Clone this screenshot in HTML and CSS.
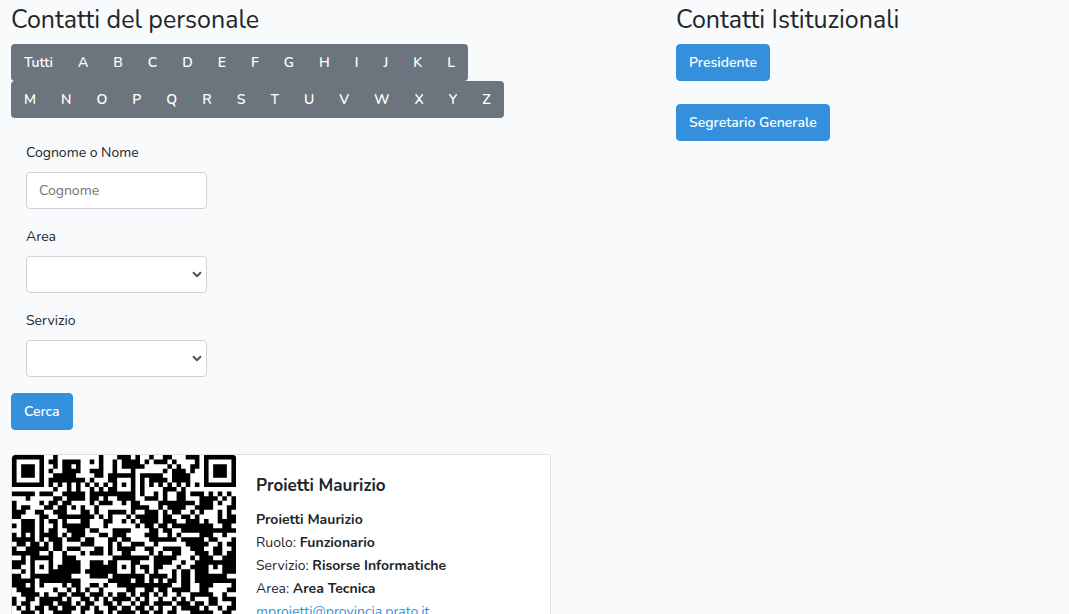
FILE: index.html
```html
<!DOCTYPE html>
<html lang="it">
<head>
<meta charset="utf-8">
<meta name="viewport" content="width=device-width, initial-scale=1">
<title>Contatti del personale</title>
<link rel="stylesheet" href="styles.css">
</head>
<body>
<main class="page">
  <section class="staff">
    <h1 class="heading">Contatti del personale</h1>
    <div class="letters">
      <div class="group"><button>Tutti</button><button>A</button><button>B</button><button>C</button><button>D</button><button>E</button><button>F</button><button>G</button><button>H</button><button>I</button><button>J</button><button>K</button><button>L</button></div>
      <div class="group"><button>M</button><button>N</button><button>O</button><button>P</button><button>Q</button><button>R</button><button>S</button><button>T</button><button>U</button><button>V</button><button>W</button><button>X</button><button>Y</button><button>Z</button></div>
    </div>
    <form class="search">
      <div class="field"><label for="surname">Cognome o Nome</label><input class="control" id="surname" type="text" placeholder="Cognome"></div>
      <div class="field"><label for="area">Area</label><div class="select"><select class="control" id="area"><option></option></select><svg class="chevron" viewBox="0 0 10 7"><path d="M1 1.2 5 5.2 9 1.2"/></svg></div></div>
      <div class="field"><label for="service">Servizio</label><div class="select"><select class="control" id="service"><option></option></select><svg class="chevron" viewBox="0 0 10 7"><path d="M1 1.2 5 5.2 9 1.2"/></svg></div></div>
      <button class="btn" type="submit">Cerca</button>
    </form>
    <article class="card">
      <svg class="qr" viewBox="0 0 49 49" role="img" aria-label="QR"><path id="modules"/></svg>
      <div class="card-body">
        <h2 class="card-title">Proietti Maurizio</h2>
        <p><b>Proietti Maurizio</b></p>
        <p>Ruolo: <b>Funzionario</b></p>
        <p>Servizio: <b>Risorse Informatiche</b></p>
        <p>Area: <b>Area Tecnica</b></p>
        <p><a href="mailto:mproietti@provincia.prato.it">mproietti@provincia.prato.it</a></p>
      </div>
    </article>
  </section>
  <section>
    <h1 class="heading">Contatti Istituzionali</h1>
    <div class="offices">
      <button class="btn">Presidente</button>
      <button class="btn">Segretario Generale</button>
    </div>
  </section>
</main>
<script src="qr.js"></script>
</body>
</html>
```
FILE: styles.css
```css
* { box-sizing: border-box; }
body {
  margin: 0;
  background: #f8fafc;
  color: #212529;
  font: 400 14px/23px Nunito, Lato, sans-serif;
}
button, input, select { font: inherit; }
.page {
  display: grid;
  grid-template-columns: 7fr 4fr;
  padding: 5px 13px 24px 11px;
}
.heading {
  margin: 0 0 8px;
  font-size: 25px;
  line-height: 31px;
  font-weight: 400;
}
.letters { margin-bottom: 23px; }
.group {
  display: flex;
  width: fit-content;
  border-radius: 4px;
  background: #6c757d;
}
.group button {
  padding: 6px 12px;
  border: 1px solid transparent;
  background: none;
  color: #fff;
}
.group button + button { margin-left: -1px; }
.btn {
  padding: 6px 12px;
  border: 1px solid #3490dc;
  border-radius: 4px;
  background: #3490dc;
  color: #fff;
}
.group button, .btn { font-weight: 600; }
.field {
  width: 181px;
  margin: 0 0 16px 15px;
}
.field label {
  display: block;
  margin-bottom: 8px;
}
.control {
  display: block;
  width: 100%;
  height: 37px;
  padding: 6px 12px;
  border: 1px solid #ced4da;
  border-radius: 4px;
  background: #fff;
  color: #495057;
}
.control::placeholder { color: #6c757d; opacity: 1; }
.select { position: relative; }
.select select { appearance: none; }
.chevron {
  position: absolute;
  right: 5px;
  top: 15px;
  width: 10px;
  height: 7px;
  fill: none;
  stroke: #495057;
  stroke-width: 2;
  pointer-events: none;
}
.card {
  display: flex;
  align-items: flex-start;
  max-width: 540px;
  margin-top: 24px;
  overflow: hidden;
  border: 1px solid #dddfe1;
  border-radius: 4px;
  background: #fff;
}
.qr { width: 224px; flex: none; border-radius: 3px; }
.card-body { padding: 20px; }
.card-title {
  margin: 0 0 11px;
  font-size: 17px;
  line-height: 22px;
  font-weight: 700;
}
.card p { margin: 0; }
.card b { font-weight: 700; }
.card a { color: #3490dc; text-decoration: none; }
.offices {
  display: flex;
  flex-direction: column;
  align-items: flex-start;
  gap: 23px;
}
```
FILE: qr.js
```js
const rows = [
  "1111111001000000" + "00010001110100100" + "1100011101111111",
  "1000001011011110" + "01010010111101011" + "1010000101000001",
  "1011101001011010" + "00010010111110000" + "0101001101011101",
  "1011101010011110" + "01110010001000000" + "1011101001011101",
  "1011101001111100" + "00110111111011111" + "0011110001011101",
  "1000001011111111" + "01000110001010111" + "1011110001000001",
  "1111111010101010" + "10101010101010101" + "0101010101111111",
  "0000000001001010" + "01010110001010000" + "1110100000000000",
  "1111101110011111" + "01111111111010010" + "1001101110101010",
  "0001000001101111" + "01101001111001110" + "1001100011110101",
  "1000001011011000" + "01011100101100001" + "1111111011101001",
  "1011000110110101" + "00100000001111001" + "0111100111100011",
  "1110011001110001" + "10100111101001110" + "1011001010001010",
  "1100001100111111" + "11010100010111110" + "1100110100001011",
  "0011101011010001" + "10001100101011110" + "1110011101001111",
  "1011101001011111" + "10001000000101101" + "1011111111100110",
  "0011101011001111" + "01100011110000110" + "1100111111111111",
  "1010101111010111" + "00011011100001110" + "0101000011100100",
  "1111101011101110" + "11000110110000111" + "1110111110110001",
  "0110110101100001" + "11000101001110010" + "0000011111001011",
  "1001111101101110" + "00110101111001100" + "1111001110011001",
  "1111110010010001" + "01110100110000101" + "0011000111011011",
  "0010111110011100" + "00000011111111011" + "1110001011100111",
  "1110100010011110" + "01110110001100011" + "1100100111111111",
  "1100101010111110" + "01111110101011011" + "0001001111010111",
  "0010100011111110" + "11111110001001010" + "0010110111000111",
  "1100111111111000" + "01111011111110111" + "1010110111111100",
  "1111101111111110" + "00000111110110101" + "0110110111111111",
  "1110101000010110" + "01101001111111111" + "1100110011100001",
  "0111100001001010" + "10010000011001101" + "1011110011000011",
  "0011110100110111" + "01110101101011010" + "1001001111100100",
  "1001101111101001" + "10101011110101001" + "0010101000110111",
  "1011001110111010" + "11001101001011011" + "1101110110110001",
  "0101011011011101" + "10100110110110101" + "0010111101001011",
  "0011101001111001" + "00110101111011011" + "0110001111100110",
  "1100011011010110" + "11001011001101011" + "0110111001010110",
  "1011101001101001" + "01101100101010110" + "1001011110110011",
  "0110011110010110" + "10110111100101001" + "1101001101011010",
  "1101001001101011" + "01011001011011010" + "0110101111001101",
  "1011011110110101" + "10100110110100111" + "0010111101111110",
  "0110101001011010" + "11011011111011010" + "1011010111111001",
  "0000000010110101" + "01101010001010110" + "1100101110001010",
  "1111111001101011" + "10110110101101001" + "0101101110101110",
  "1000001011010110" + "01011010001010110" + "1011001110001001",
  "1011101010101101" + "10110111111001011" + "0110110111111011",
  "1011101001011010" + "01101001011010110" + "1101011010110110",
  "1011101010110101" + "11010110100110101" + "0110101101011001",
  "1000001001101011" + "00101101011010110" + "1001110110101101",
  "1111111011010110" + "10110110101101011" + "0110011011010110"
];

const path = rows.flatMap((row, y) =>
  Array.from(row.matchAll(/1+/g), run => `M${run.index} ${y}h${run[0].length}v1h-${run[0].length}z`)
).join("");
document.getElementById("modules").setAttribute("d", path);
```
